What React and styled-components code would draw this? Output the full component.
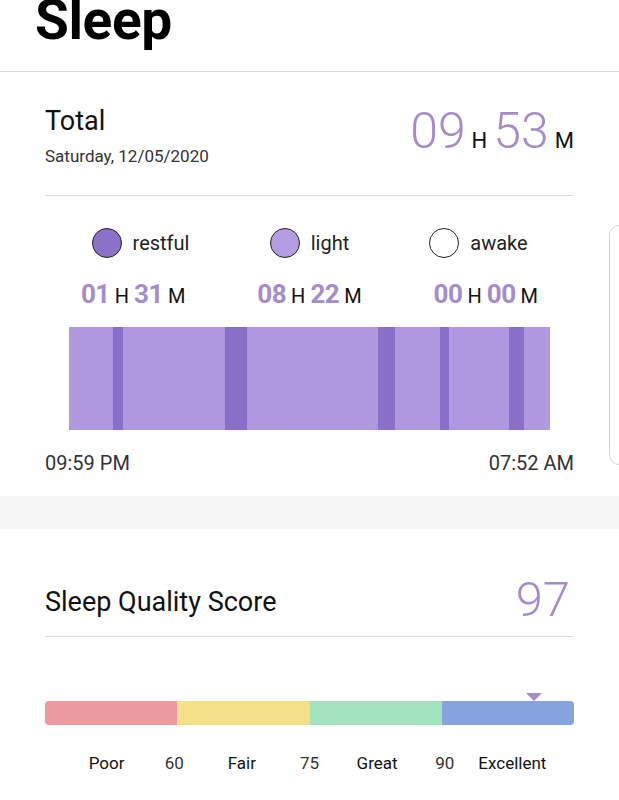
import React from 'react';
import styled, { createGlobalStyle } from 'styled-components';

const purple = '#a48ccb';
const lightBar = '#b098e0';
const darkBar = '#8a70c8';

const GlobalStyle = createGlobalStyle`
  html, body {
    margin: 0;
    padding: 0;
    background: #ffffff;
  }
  body {
    font-family: Roboto, "Noto Sans", "Liberation Sans", sans-serif;
    color: #111;
    overflow: hidden;
  }
`;

const Page = styled.div`
  position: relative;
  width: 619px;
  height: 800px;
  overflow: hidden;
  background: #fff;
`;

const Header = styled.header`
  display: flex;
  align-items: flex-start;
  height: 72px;
  box-sizing: border-box;
  border-bottom: 1px solid #dcdcdc;
  padding-left: 35px;
`;

const Title = styled.h1`
  margin: -7px 0 0;
  font-size: 55px;
  line-height: 55px;
  font-weight: 700;
  color: #000;
  letter-spacing: -0.4px;
`;

const Card = styled.section`
  background: #fff;
  padding: ${(p) => p.$pad};
`;

const Band = styled.div`
  height: 33px;
  background: #f7f7f7;
`;

const TopRow = styled.div`
  display: flex;
  justify-content: space-between;
  align-items: flex-start;
`;

const Label = styled.div`
  font-size: 27px;
  line-height: 32px;
  color: #111;
`;

const DateText = styled.div`
  margin-top: 9px;
  font-size: 17px;
  line-height: 20px;
  color: #333;
`;

const BigTime = styled.div`
  display: flex;
  align-items: baseline;
  margin-top: 1px;
  gap: 6px;
`;

const BigNum = styled.span`
  font-size: ${(p) => p.$size || 50}px;
  line-height: 1;
  font-weight: 300;
  color: ${purple};
`;

const Unit = styled.span`
  font-size: ${(p) => p.$size}px;
  color: #111;
`;

const Divider = styled.div`
  height: 1px;
  background: #dcdcdc;
  margin-top: ${(p) => p.$top}px;
`;

const Columns = styled.div`
  display: grid;
  grid-template-columns: repeat(3, 1fr);
  margin-top: ${(p) => p.$top}px;
  padding: 0 ${(p) => p.$inset || 0}px;
`;

const LegendItem = styled.div`
  display: flex;
  align-items: center;
  justify-content: center;
  gap: 11px;
  font-size: 20px;
  color: #222;
  height: 30px;
`;

const Dot = styled.span`
  width: 28px;
  height: 28px;
  border-radius: 50%;
  border: 1.5px solid #222;
  background: ${(p) => p.$color};
`;

const Duration = styled.div`
  display: flex;
  align-items: baseline;
  justify-content: center;
  gap: 5px;
  line-height: 1;
`;

const DurNum = styled.span`
  font-size: 26px;
  font-weight: 700;
  color: ${purple};
  letter-spacing: -0.5px;
`;

const DurUnit = styled.span`
  font-size: 20px;
  color: #111;
`;

const Chart = styled.div`
  position: relative;
  margin: 20px 24px 0;
  height: 103px;
  background: ${lightBar};
`;

const Stripe = styled.div`
  position: absolute;
  top: 0;
  bottom: 0;
  background: ${darkBar};
`;

const TimeRow = styled.div`
  display: flex;
  justify-content: space-between;
  margin-top: 21px;
  font-size: 20px;
  line-height: 24px;
  color: #333;
`;

const ScoreRow = styled.div`
  display: flex;
  justify-content: space-between;
  align-items: flex-end;
`;

const ScoreTitle = styled.div`
  font-size: 27px;
  line-height: 32px;
  color: #111;
  padding-bottom: 6px;
`;

const Scale = styled.div`
  position: relative;
  margin-top: 64px;
`;

const ScaleBar = styled.div`
  display: grid;
  grid-template-columns: repeat(4, 1fr);
  height: 24px;
  border-radius: 4px;
  overflow: hidden;
`;

const Segment = styled.div`
  background: ${(p) => p.$color};
`;

const Marker = styled.div`
  position: absolute;
  top: -8px;
  width: 0;
  height: 0;
  border-left: 8px solid transparent;
  border-right: 8px solid transparent;
  border-top: 8px solid ${purple};
  transform: translateX(-50%);
`;

const ScaleLabels = styled.div`
  display: grid;
  grid-template-columns: 1fr 0 1fr 0 1fr 0 1fr;
  margin: 28px -6px 0;
  font-size: 17px;
  line-height: 20px;
  color: #111;
`;

const ScaleCell = styled.div`
  display: flex;
  justify-content: center;
  white-space: nowrap;
  color: ${(p) => (p.$num ? '#333' : '#111')};
`;

const EdgePanel = styled.div`
  position: absolute;
  top: 225px;
  right: -30px;
  width: 38px;
  height: 238px;
  border: 1.5px solid #d4d4d4;
  border-radius: 10px;
  background: #fff;
`;

const stripes = [
  [0.091, 0.022],
  [0.325, 0.045],
  [0.643, 0.034],
  [0.772, 0.019],
  [0.914, 0.033],
];

const legend = [
  { name: 'restful', color: '#8b72c7', h: '01', m: '31' },
  { name: 'light', color: '#b39ce0', h: '08', m: '22' },
  { name: 'awake', color: '#fff', h: '00', m: '00' },
];

const scale = [
  { label: 'Poor', color: '#eb9aa0' },
  { label: 'Fair', color: '#f5e08a' },
  { label: 'Great', color: '#a2e2bc' },
  { label: 'Excellent', color: '#86a3df' },
];
const ticks = ['60', '75', '90'];

export default function App() {
  const score = 97;
  const markerPos = 0.925;
  return (
    <Page>
      <GlobalStyle />
      <Header>
        <Title>Sleep</Title>
      </Header>

      <Card $pad="33px 45px 21px">
        <TopRow>
          <div>
            <Label>Total</Label>
            <DateText>Saturday, 12/05/2020</DateText>
          </div>
          <BigTime>
            <BigNum>09</BigNum>
            <Unit $size={22}>H</Unit>
            <BigNum>53</BigNum>
            <Unit $size={22}>M</Unit>
          </BigTime>
        </TopRow>
        <Divider $top={29} />

        <Columns $top={32} $inset={11}>
          {legend.map((l) => (
            <LegendItem key={l.name}>
              <Dot $color={l.color} />
              <span>{l.name}</span>
            </LegendItem>
          ))}
        </Columns>
        <Columns $top={23}>
          {legend.map((l) => (
            <Duration key={l.name}>
              <DurNum>{l.h}</DurNum>
              <DurUnit>H</DurUnit>
              <DurNum>{l.m}</DurNum>
              <DurUnit>M</DurUnit>
            </Duration>
          ))}
        </Columns>

        <Chart>
          {stripes.map(([left, width], i) => (
            <Stripe
              key={i}
              style={{ left: `${left * 100}%`, width: `${width * 100}%` }}
            />
          ))}
        </Chart>
        <TimeRow>
          <span>09:59 PM</span>
          <span>07:52 AM</span>
        </TimeRow>
      </Card>

      <Band />

      <Card $pad="46px 45px 0 45px">
        <ScoreRow>
          <ScoreTitle>Sleep Quality Score</ScoreTitle>
          <BigNum $size={49} style={{ marginRight: 4 }}>{score}</BigNum>
        </ScoreRow>
        <Divider $top={12} />

        <Scale>
          <Marker style={{ left: `${markerPos * 100}%` }} />
          <ScaleBar>
            {scale.map((s) => (
              <Segment key={s.label} $color={s.color} />
            ))}
          </ScaleBar>
        </Scale>
        <ScaleLabels>
          {scale.map((s, i) => (
            <React.Fragment key={s.label}>
              <ScaleCell>{s.label}</ScaleCell>
              {i < ticks.length && <ScaleCell $num>{ticks[i]}</ScaleCell>}
            </React.Fragment>
          ))}
        </ScaleLabels>
      </Card>

      <EdgePanel />
    </Page>
  );
}
